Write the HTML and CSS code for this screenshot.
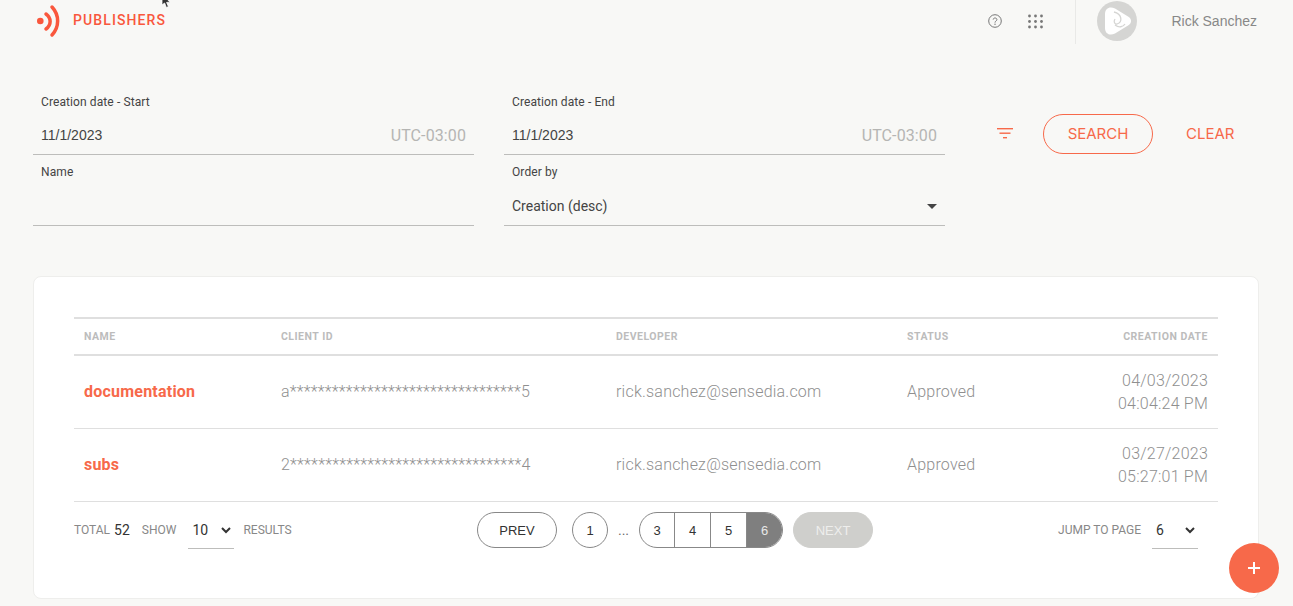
FILE: index.html
```html
<!DOCTYPE html>
<html lang="en">
<head>
<meta charset="utf-8">
<title>Publishers</title>
<link rel="stylesheet" href="styles.css">
</head>
<body>
<svg class="cursor" width="12" height="10" viewBox="0 0 12 10"><path d="M1-6 L1 5 L3.6 3 L5.4 7.5 L7.4 6.6 L5.6 2.4 L9 2.2 Z" fill="#333" stroke="#fff" stroke-width=".8"/></svg>
<header class="topbar">
  <div class="brand">
    <svg class="logo" width="24" height="36" viewBox="0 0 24 36"><circle cx="4.3" cy="19" r="3.3" fill="#f9573d"/><path d="M10 12 C15.500 16 15.500 23 10 27" fill="none" stroke="#f9573d" stroke-width="3.5" stroke-linecap="round"/><path d="M16 5 C23.500 13 23.500 25 16 33" fill="none" stroke="#f9573d" stroke-width="3.5" stroke-linecap="round"/></svg>
    <span class="brand-name">PUBLISHERS</span>
  </div>
  <div class="top-actions">
    <svg class="help" width="14" height="14" viewBox="0 0 14 14"><circle cx="7" cy="7" r="6.3" fill="none" stroke="#777" stroke-width="1"/><path d="M5.2 5.6 C5.2 3.4 8.9 3.5 8.9 5.6 C8.9 7 7 7 7 8.6" fill="none" stroke="#777" stroke-width="1"/><circle cx="7" cy="10.3" r=".7" fill="#777"/></svg>
    <svg class="apps" width="15" height="15" viewBox="0 0 15 15"><g fill="#777"><circle cx="1.500" cy="2" r="1.400"/><circle cx="7.500" cy="2" r="1.400"/><circle cx="13.500" cy="2" r="1.400"/><circle cx="1.500" cy="7.500" r="1.400"/><circle cx="7.500" cy="7.500" r="1.400"/><circle cx="13.500" cy="7.500" r="1.400"/><circle cx="1.500" cy="13" r="1.400"/><circle cx="7.500" cy="13" r="1.400"/><circle cx="13.500" cy="13" r="1.400"/></g></svg>
    <div class="divider"></div>
    <svg class="avatar" width="40" height="40" viewBox="0 0 40 40"><circle cx="20" cy="20" r="20" fill="#d5d5d3"/><path d="M8 13 C8 7 13 5 18 7.500 L31 15.500 C35 18 35 22 31 24.500 L18 32.500 C13 35 8 33 8 27 Z" fill="#fff"/><path d="M17 11 C25 13 26 21 20 23 C18 23.500 16 21 18 18 M18 24 C22 27 26 26 28 23" fill="none" stroke="#d5d5d3" stroke-width="1.300"/></svg>
    <span class="user">Rick Sanchez</span>
  </div>
</header>

<section class="filters">
  <div class="fields">
    <div class="field">
      <label class="field-label">Creation date - Start</label>
      <div class="field-value"><span class="date">11/1/2023</span><span class="tz">UTC-03:00</span></div>
    </div>
    <div class="field">
      <label class="field-label">Creation date - End</label>
      <div class="field-value"><span class="date">11/1/2023</span><span class="tz">UTC-03:00</span></div>
    </div>
    <div class="field">
      <label class="field-label">Name</label>
      <div class="field-value"></div>
    </div>
    <div class="field">
      <label class="field-label">Order by</label>
      <div class="field-value"><span>Creation (desc)</span><span class="caret"></span></div>
    </div>
  </div>
  <div class="filter-actions">
    <svg class="filter-icon" width="16" height="11" viewBox="0 0 16 11"><g fill="#f7694a"><rect x="0" y="0" width="16" height="1.400"/><rect x="2.500" y="4.500" width="11" height="1.400"/><rect x="6" y="9" width="4" height="1.400"/></g></svg>
    <button class="btn-search">SEARCH</button>
    <button class="btn-clear">CLEAR</button>
  </div>
</section>

<main class="card">
  <table class="table">
    <thead>
      <tr><th class="c-name">NAME</th><th class="c-client">CLIENT ID</th><th class="c-dev">DEVELOPER</th><th class="c-status">STATUS</th><th class="c-date">CREATION DATE</th></tr>
    </thead>
    <tbody>
      <tr>
        <td class="c-name"><a class="row-link">documentation</a></td>
        <td>a*********************************5</td>
        <td>rick.sanchez@sensedia.com</td>
        <td>Approved</td>
        <td class="c-date">04/03/2023<br>04:04:24 PM</td>
      </tr>
      <tr>
        <td class="c-name"><a class="row-link">subs</a></td>
        <td>2*********************************4</td>
        <td>rick.sanchez@sensedia.com</td>
        <td>Approved</td>
        <td class="c-date">03/27/2023<br>05:27:01 PM</td>
      </tr>
    </tbody>
  </table>
  <div class="pager">
    <div class="pager-left">
      <span class="small">TOTAL</span><span class="total">52</span>
      <span class="small show">SHOW</span>
      <select class="select sel-show"><option>10</option></select>
      <span class="small">RESULTS</span>
    </div>
    <div class="pager-mid">
      <button class="pill">PREV</button>
      <button class="page-one">1</button>
      <span class="dots">...</span>
      <div class="pages">
        <span class="pg">3</span><span class="pg">4</span><span class="pg">5</span><span class="pg active">6</span>
      </div>
      <button class="pill next">NEXT</button>
    </div>
    <div class="pager-right">
      <span class="small">JUMP TO PAGE</span>
      <select class="select sel-jump"><option>6</option></select>
    </div>
  </div>
</main>
<button class="fab"><svg width="14" height="14" viewBox="0 0 14 14"><path d="M7 1V13M1 7H13" stroke="#fff" stroke-width="2"/></svg></button>
</body>
</html>
```
FILE: styles.css
```css
* { box-sizing: border-box; }
html, body { height: 100%; }
body {
  margin: 0;
  height: 606px;
  overflow: hidden;
  background: #f8f8f6;
  font-family: Roboto, "Liberation Sans", sans-serif;
  color: #333;
  position: relative;
}
.cursor { position: absolute; left: 161px; top: 0; }
.topbar {
  height: 44px;
  display: flex;
  justify-content: space-between;
  padding: 0 36px;
}
.brand { display: flex; align-items: flex-start; }
.logo { margin-top: 2px; }
.brand-name {
  margin-left: 13px;
  margin-top: 12px;
  font-size: 14px;
  line-height: 16px;
  font-weight: 500;
  letter-spacing: 1.1px;
  color: #f9573d;
}
.top-actions { display: flex; align-items: flex-start; }
.help { margin-top: 14px; }
.apps { margin-top: 14px; margin-left: 26px; }
.divider { width: 1px; height: 44px; background: #e9e9e7; margin-left: 32px; }
.avatar { margin-left: 21px; margin-top: 1px; }
.user {
  margin-left: 34px;
  margin-top: 13px;
  font-family: "Liberation Sans", sans-serif;
  font-size: 14px;
  line-height: 16px;
  color: #888;
}
.filters {
  display: flex;
  padding: 44px 0 0 33px;
}
.fields {
  display: grid;
  grid-template-columns: 441px 441px;
  column-gap: 30px;
}
.field { height: 71px; padding-top: 10px; }
.field:nth-child(-n+2) { height: 67px; padding-top: 7px; }
.field-label {
  display: block;
  padding-left: 8px;
  font-size: 12px;
  line-height: 14px;
  letter-spacing: .1px;
  color: #444;
}
.field-value {
  height: 47px;
  border-bottom: 1px solid #bdbdbb;
  display: flex;
  align-items: center;
  justify-content: space-between;
  padding: 8px 8px 0;
  font-size: 14px;
  color: #444;
}
.field:nth-child(-n+2) .field-value { height: 46px; padding-top: 7px; }
.date { font-family: "Liberation Sans", sans-serif; }
.tz { font-size: 16px; letter-spacing: .1px; color: #b5b5b3; }
.caret {
  width: 0; height: 0;
  border-left: 5px solid transparent;
  border-right: 5px solid transparent;
  border-top: 5px solid #444;
}
.filter-actions {
  display: flex;
  align-items: center;
  height: 40px;
  margin-top: 26px;
  padding-left: 52px;
}
.filter-icon { margin-top: -2px; }
.btn-search {
  width: 110px;
  height: 40px;
  margin-left: 30px;
  padding: 0 0 1px;
  background: transparent;
  border: 1px solid #f7694a;
  border-radius: 20px;
  color: #f7694a;
  font-family: Inter, sans-serif;
  font-size: 15px;
}
.btn-clear {
  margin-left: 33px;
  padding: 0 0 1px;
  background: none;
  border: 0;
  color: #f7694a;
  font-family: Inter, sans-serif;
  font-size: 15px;
}
.card {
  position: absolute;
  left: 33px;
  top: 276px;
  width: 1226px;
  height: 323px;
  padding: 40px 40px 0;
  background: #fff;
  border: 1px solid #eeeeec;
  border-radius: 8px;
}
.table {
  width: 1144px;
  border-collapse: collapse;
  table-layout: fixed;
  border-top: 2px solid #dfdfdf;
}
.table th {
  height: 37px;
  padding: 0 10px;
  text-align: left;
  font-size: 10.5px;
  font-weight: 700;
  letter-spacing: .5px;
  color: #bcbcbc;
  border-bottom: 2px solid #dfdfdf;
}
.table th.c-name { width: 197px; }
.table th.c-client { width: 335px; }
.table th.c-dev { width: 291px; }
.table th.c-status { width: 181px; }
.table td {
  height: 73px;
  padding: 0 10px;
  font-size: 16px;
  font-weight: 300;
  line-height: 23px;
  letter-spacing: .22px;
  color: #8f8f8f;
  border-bottom: 1px solid #dfdfdf;
}
.table .c-date { text-align: right; }
.row-link { font-weight: 700; color: #f7694a; }
.pager {
  position: relative;
  display: flex;
  align-items: flex-start;
  justify-content: space-between;
  padding-top: 10px;
}
.pager-left, .pager-right { display: flex; align-items: flex-start; }
.small {
  margin-top: 10px;
  font-size: 12px;
  line-height: 16px;
  color: #888;
}
.total { margin: 9px 0 0 4px; font-size: 14px; line-height: 18px; color: #333; }
.show { margin-left: 12px; }
.select {
  height: 37px;
  border: 0;
  border-bottom: 1px solid #bdbdbb;
  background: transparent;
  font-family: Roboto, sans-serif;
  font-size: 14px;
  color: #333;
  outline: 0;
}
.sel-show { width: 46px; margin: 0 9px 0 12px; }
.sel-jump { width: 46px; margin: 0 20px 0 11px; }
.pager-mid {
  position: absolute;
  left: 403px;
  top: 10px;
  display: flex;
  align-items: center;
  font-family: "Liberation Sans", sans-serif;
}
.pill {
  width: 80px;
  height: 36px;
  padding: 1px 0 0;
  background: transparent;
  border: 1px solid #888;
  border-radius: 18px;
  font-family: "Liberation Sans", sans-serif;
  font-size: 13px;
  color: #333;
}
.next { margin-left: 10px; background: #cfcfcc; border-color: #cfcfcc; color: #eeeeec; }
.page-one {
  width: 36px;
  height: 36px;
  margin-left: 15px;
  padding: 1px 0 0;
  background: transparent;
  border: 1px solid #888;
  border-radius: 50%;
  font-family: "Liberation Sans", sans-serif;
  font-size: 13px;
  color: #333;
}
.dots { width: 31px; padding-top: 1px; text-align: center; font-size: 13px; color: #666; }
.pages {
  display: flex;
  width: 144px;
  height: 36px;
  border: 1px solid #888;
  border-radius: 18px;
  overflow: hidden;
}
.pg {
  flex: 0 0 36px;
  display: flex;
  align-items: center;
  justify-content: center;
  padding-top: 1px;
  font-size: 13px;
  color: #333;
  border-left: 1px solid #888;
}
.pg:first-child { flex-basis: 34px; border-left: 0; }
.pg.active { flex: 1; background: #7f7f7f; color: #e8e8e8; }
.fab {
  position: absolute;
  left: 1229px;
  top: 543px;
  width: 50px;
  height: 50px;
  display: flex;
  align-items: center;
  justify-content: center;
  padding: 0;
  border: 0;
  border-radius: 50%;
  background: #f7694a;
}
```
